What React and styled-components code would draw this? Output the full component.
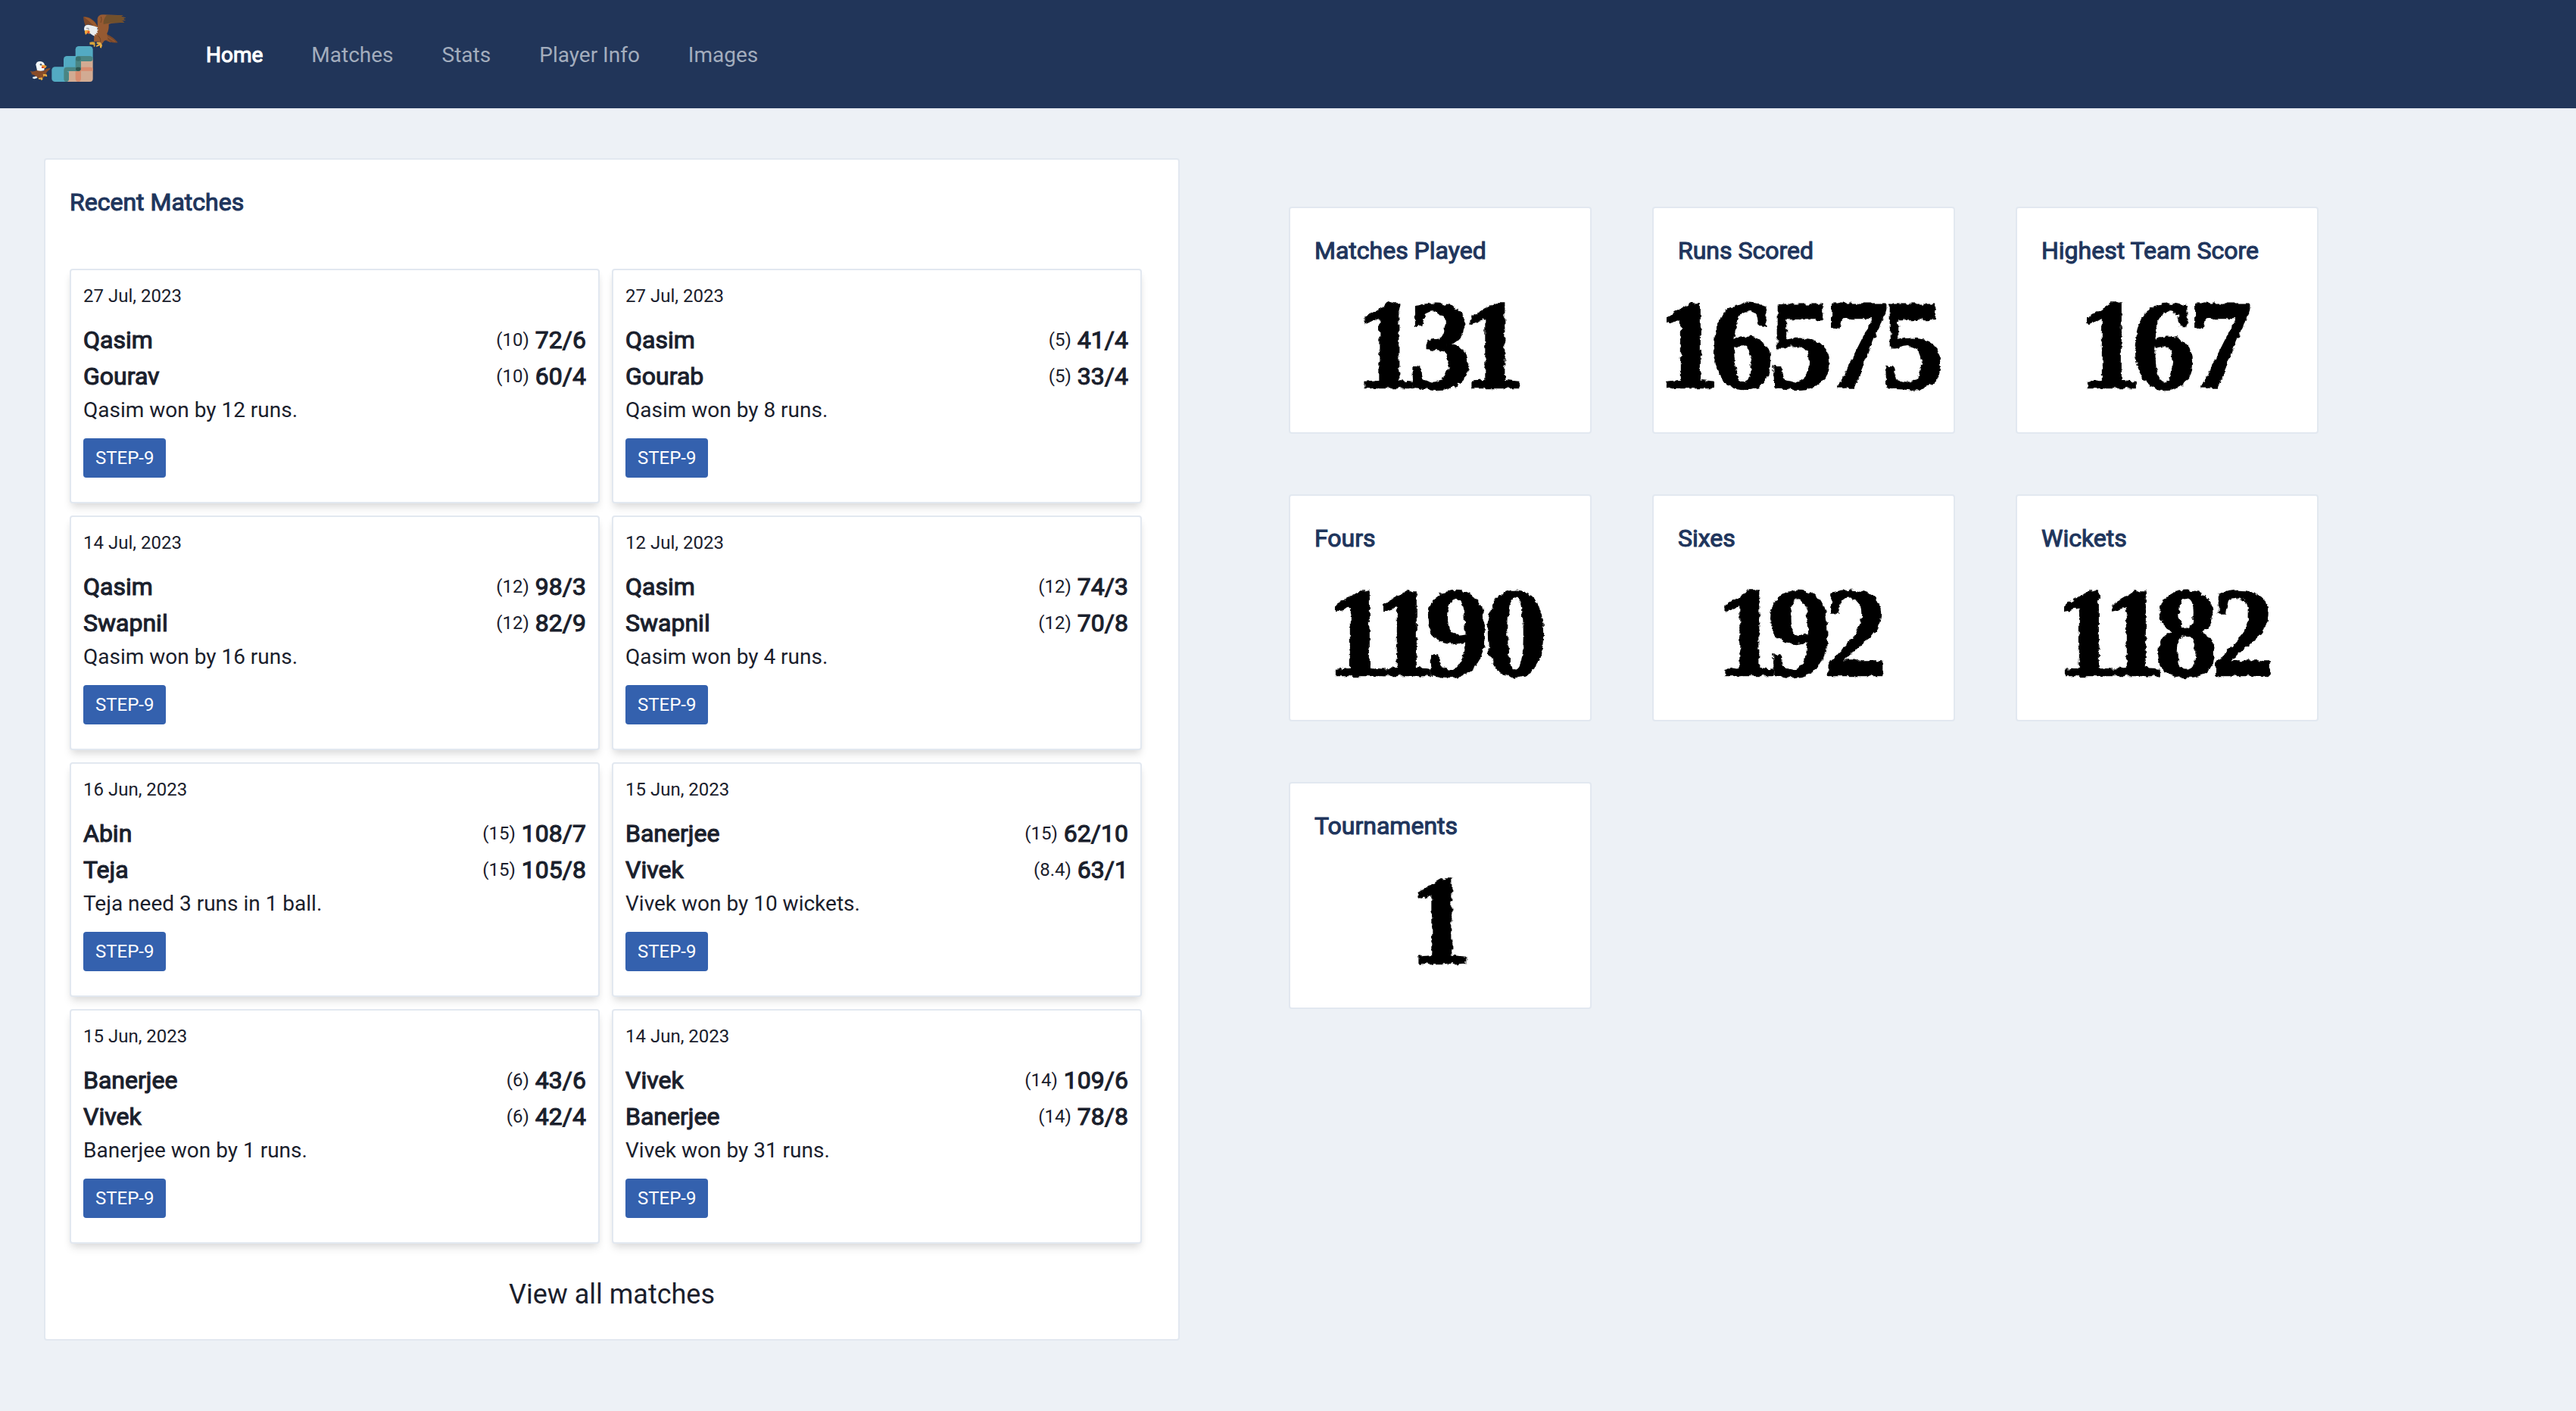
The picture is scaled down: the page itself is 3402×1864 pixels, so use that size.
import React from "react";
import styled, { createGlobalStyle } from "styled-components";

const GlobalStyle = createGlobalStyle`
  *, *::before, *::after { box-sizing: border-box; }
  body {
    margin: 0;
    min-height: 1864px;
    background: #edf1f6;
    color: #1a202c;
    font-family: Roboto, "Liberation Sans", sans-serif;
  }
`;

const Header = styled.header`
  display: flex;
  align-items: center;
  height: 145px;
  padding-left: 39px;
  background: #213559;
  border-bottom: 2px solid #e6eaf1;
`;

const Logo = styled.svg`
  width: 128px;
  height: 92px;
  margin-top: -15px;
  flex: none;
`;

const Nav = styled.nav`
  display: flex;
  gap: 64px;
  margin: 2px 0 0 105px;
`;

const NavLink = styled.a`
  font-size: 28px;
  line-height: 42px;
  color: ${(p) => (p.$active ? "#ffffff" : "#a3adbd")};
  -webkit-text-stroke: ${(p) => (p.$active ? "1.1px #ffffff" : "0")};
`;

const Main = styled.main`
  display: flex;
  align-items: flex-start;
  padding: 64px 0 0 58px;
`;

const Box = styled.section`
  background: #ffffff;
  border: 2px solid #e2e8f0;
  border-radius: 4px;
`;

const Panel = styled(Box)`
  width: 1500px;
  padding: 32px;
`;

const Heading = styled.h2`
  margin: 0;
  font-size: 32px;
  font-weight: 400;
  line-height: 48px;
  color: #20355c;
  -webkit-text-stroke: 1.1px #20355c;
`;

const MatchGrid = styled.div`
  display: grid;
  grid-template-columns: 700px 700px;
  gap: 16px;
  margin-top: 64px;
`;

const MatchCard = styled.article`
  display: flex;
  flex-direction: column;
  align-items: stretch;
  height: 310px;
  padding: 16px;
  background: #ffffff;
  border: 2px solid #e2e8f0;
  border-radius: 4px;
  box-shadow: 0 8px 12px -2px rgba(0, 0, 0, 0.1), 0 4px 8px -2px rgba(0, 0, 0, 0.06);
`;

const MatchDate = styled.div`
  margin-bottom: 16px;
  font-size: 24px;
  line-height: 36px;
`;

const TeamRow = styled.div`
  display: flex;
  justify-content: space-between;
  height: 48px;
  line-height: 48px;
`;

const Strong = styled.span`
  font-size: 32px;
  -webkit-text-stroke: 1.1px #1a202c;
`;

const Score = styled.span`
  display: flex;
  gap: 8px;
`;

const Overs = styled.span`
  font-size: 24px;
  line-height: 48px;
`;

const Result = styled.div`
  font-size: 28px;
  line-height: 42px;
`;

const Tag = styled.span`
  align-self: flex-start;
  margin-top: 16px;
  padding: 8px 16px;
  border-radius: 4px;
  background: #3461ae;
  color: #ffffff;
  font-size: 24px;
  line-height: 36px;
`;

const ViewAll = styled.a`
  display: block;
  margin-top: 40px;
  text-align: center;
  font-size: 36px;
  line-height: 54px;
`;

const StatGrid = styled.div`
  display: grid;
  grid-template-columns: repeat(3, 400px);
  gap: 80px;
  margin: 64px 0 0 144px;
`;

const StatCard = styled(Box)`
  height: 300px;
  padding: 32px 0;
`;

const StatTitle = styled(Heading)`
  padding-left: 32px;
`;

const StatValue = styled.div`
  margin-top: 41px;
  text-align: center;
  white-space: nowrap;
  font-family: "Liberation Serif", serif;
  font-weight: 700;
  font-size: 167px;
  line-height: 120px;
  color: #000000;
  -webkit-text-stroke: 2.5px #000000;
  filter: url(#worn-ink);
`;

const Digit = styled.span`
  margin-left: ${(p) => p.$before}px;
  letter-spacing: ${(p) => p.$after}px;
`;

const FilterDefs = styled.svg`
  display: block;
  width: 0;
  height: 0;
`;

const digitAdvance = { 0: 80, 1: 62, 2: 73, 3: 78, 5: 76, 6: 79, 7: 72, 8: 76, 9: 75 };

/* half of the tightening that a digit needs on each of its sides */
const trim = (d) => (d === undefined ? 0 : (digitAdvance[d] - 83.5) / 2);

const navItems = ["Home", "Matches", "Stats", "Player Info", "Images"];

const matches = [
  ["27 Jul, 2023", "Qasim", "(10)", "72/6", "Gourav", "(10)", "60/4", "Qasim won by 12 runs."],
  ["27 Jul, 2023", "Qasim", "(5)", "41/4", "Gourab", "(5)", "33/4", "Qasim won by 8 runs."],
  ["14 Jul, 2023", "Qasim", "(12)", "98/3", "Swapnil", "(12)", "82/9", "Qasim won by 16 runs."],
  ["12 Jul, 2023", "Qasim", "(12)", "74/3", "Swapnil", "(12)", "70/8", "Qasim won by 4 runs."],
  ["16 Jun, 2023", "Abin", "(15)", "108/7", "Teja", "(15)", "105/8", "Teja need 3 runs in 1 ball."],
  ["15 Jun, 2023", "Banerjee", "(15)", "62/10", "Vivek", "(8.4)", "63/1", "Vivek won by 10 wickets."],
  ["15 Jun, 2023", "Banerjee", "(6)", "43/6", "Vivek", "(6)", "42/4", "Banerjee won by 1 runs."],
  ["14 Jun, 2023", "Vivek", "(14)", "109/6", "Banerjee", "(14)", "78/8", "Vivek won by 31 runs."],
];

const stats = [
  ["Matches Played", "131"],
  ["Runs Scored", "16575"],
  ["Highest Team Score", "167"],
  ["Fours", "1190"],
  ["Sixes", "192"],
  ["Wickets", "1182"],
  ["Tournaments", "1"],
];

function Team({ name, overs, score }) {
  return (
    <TeamRow>
      <Strong>{name}</Strong>
      <Score>
        <Overs>{overs}</Overs>
        <Strong>{score}</Strong>
      </Score>
    </TeamRow>
  );
}

function EagleLogo() {
  return (
    <Logo viewBox="120 54 384 276">
      {/* steps */}
      <g fill="#d2ab93">
        <rect x="302" y="224" width="69" height="58" rx="12" />
        <rect x="256" y="266" width="68" height="58" rx="12" />
        <rect x="302" y="266" width="69" height="58" rx="12" />
      </g>
      <path d="M314 266H359Q371 266 371 274V281H324V310Q324 324 313 324Q302 324 302 310V278Q302 266 314 266Z" fill="#d78c6f" />
      <g fill="#53aac2">
        <rect x="302" y="183" width="69" height="60" rx="13" />
        <rect x="255" y="222" width="69" height="60" rx="13" />
        <rect x="208" y="265" width="68" height="59" rx="13" />
      </g>
      <g fill="#4a8583">
        <path d="M315 222H358Q371 222 371 233Q371 243 358 243H324V270Q324 282 313 282H268Q276 284 276 292V311Q276 324 266 324Q256 324 256 311V278Q256 266 268 266H302V235Q302 222 315 222Z" />
      </g>
      <rect x="303" y="266" width="20" height="15" rx="7" fill="#2d5550" />
      <rect x="303" y="224" width="20" height="18" rx="7" fill="#39716f" />
      {/* large eagle */}
      <path d="M333 67Q353 64 372 80Q386 92 391 108L374 107Q356 94 347 98L342 106Q334 84 333 67Z" fill="#7b482b" />
      <path d="M335 67Q358 69 378 88L392 109L378 106Q355 82 335 67Z" fill="#9a5a2e" />
      <path d="M422 134Q452 145 470 169Q442 171 419 158Z" fill="#7b492b" />
      <path d="M421 140L458 165M416 147L440 167" stroke="#9b5e35" strokeWidth="3" />
      <path d="M389 75Q391 58 411 58L491 61L481 66L502 70L490 75L501 81L485 82L496 89L462 91Q444 91 434 96Q435 119 427 132L430 156L416 162L407 174L393 164L375 166L376 139L390 116Z" fill="#965a32" />
      <path d="M425 60L491 61L481 66L502 70L490 75L501 81L485 82L496 89L462 91Q440 90 413 96Q410 80 425 60Z" fill="#71502c" />
      <path d="M403 66Q408 78 402 90M391 142Q403 150 401 165" stroke="#704426" strokeWidth="3" fill="none" />
      <path d="M338 105Q347 94 361 100Q377 103 391 109L387 115L393 119L387 123L391 130L383 131L386 137L378 136L379 143Q362 137 354 125L338 122Q334 113 338 105Z" fill="#ebeef0" />
      <path d="M345 112H354V119" stroke="#888f9b" strokeWidth="3" fill="none" />
      <path d="M339 121Q353 116 359 123L359 134L349 132L342 138Q337 129 339 121Z" fill="#f1a73b" />
      <path d="M350 124H358L356 132L349 132Z" fill="#d9472e" />
      <path d="M358 168Q371 164 379 168L380 184L375 186L374 178L362 176L359 178Z" fill="#d7a43b" />
      <path d="M386 167Q404 164 408 180L404 191L399 188L399 180L385 186L384 181L394 175L386 173Z" fill="#e7ad43" />
      {/* small eagle */}
      <path d="M151 278Q132 287 122 281L129 291L127 294L139 298L148 308L174 309L184 300L188 286L203 272L199 270L184 274L176 282Z" fill="#884c29" />
      <path d="M145 256Q147 243 162 243Q178 244 180 258L178 279Q164 284 150 279Z" fill="#f4f7f8" />
      <circle cx="165" cy="256" r="4" fill="#59626f" />
      <path d="M168 258Q181 255 189 263Q184 264 184 270H169Z" fill="#f0a438" />
      <path d="M168 264L180 265L175 270H168Z" fill="#d8422b" />
      <path d="M133 305L148 302L151 309L139 313L132 310Z" fill="#e6edf1" />
      <path d="M173 293L188 295L190 303L184 304L182 300L175 303ZM155 309L170 307L173 314L167 319L164 314L156 314Z" fill="#e9ad42" />
    </Logo>
  );
}

export default function App() {
  return (
    <>
      <GlobalStyle />
      <Header>
        <EagleLogo />
        <Nav>
          {navItems.map((item, i) => (
            <NavLink key={item} $active={i === 0}>
              {item}
            </NavLink>
          ))}
        </Nav>
      </Header>
      <Main>
        <Panel>
          <Heading>Recent Matches</Heading>
          <MatchGrid>
            {matches.map(([date, a, aOvers, aScore, b, bOvers, bScore, result], i) => (
              <MatchCard key={i}>
                <MatchDate>{date}</MatchDate>
                <Team name={a} overs={aOvers} score={aScore} />
                <Team name={b} overs={bOvers} score={bScore} />
                <Result>{result}</Result>
                <Tag>STEP-9</Tag>
              </MatchCard>
            ))}
          </MatchGrid>
          <ViewAll>View all matches</ViewAll>
        </Panel>
        <StatGrid>
          {stats.map(([title, value]) => (
            <StatCard key={title}>
              <StatTitle>{title}</StatTitle>
              <StatValue>
                {value.split("").map((d, i) => (
                  <Digit key={i} $before={i === 0 ? trim(d) : 0} $after={trim(d) + trim(value[i + 1])}>
                    {d}
                  </Digit>
                ))}
              </StatValue>
            </StatCard>
          ))}
        </StatGrid>
      </Main>
      <FilterDefs aria-hidden="true">
        <filter id="worn-ink" x="-5%" y="-10%" width="110%" height="120%" colorInterpolationFilters="sRGB">
          <feTurbulence type="fractalNoise" baseFrequency="0.12" numOctaves="3" seed="4" result="noise" />
          <feDisplacementMap in="SourceGraphic" in2="noise" scale="7" xChannelSelector="R" yChannelSelector="G" />
        </filter>
      </FilterDefs>
    </>
  );
}
